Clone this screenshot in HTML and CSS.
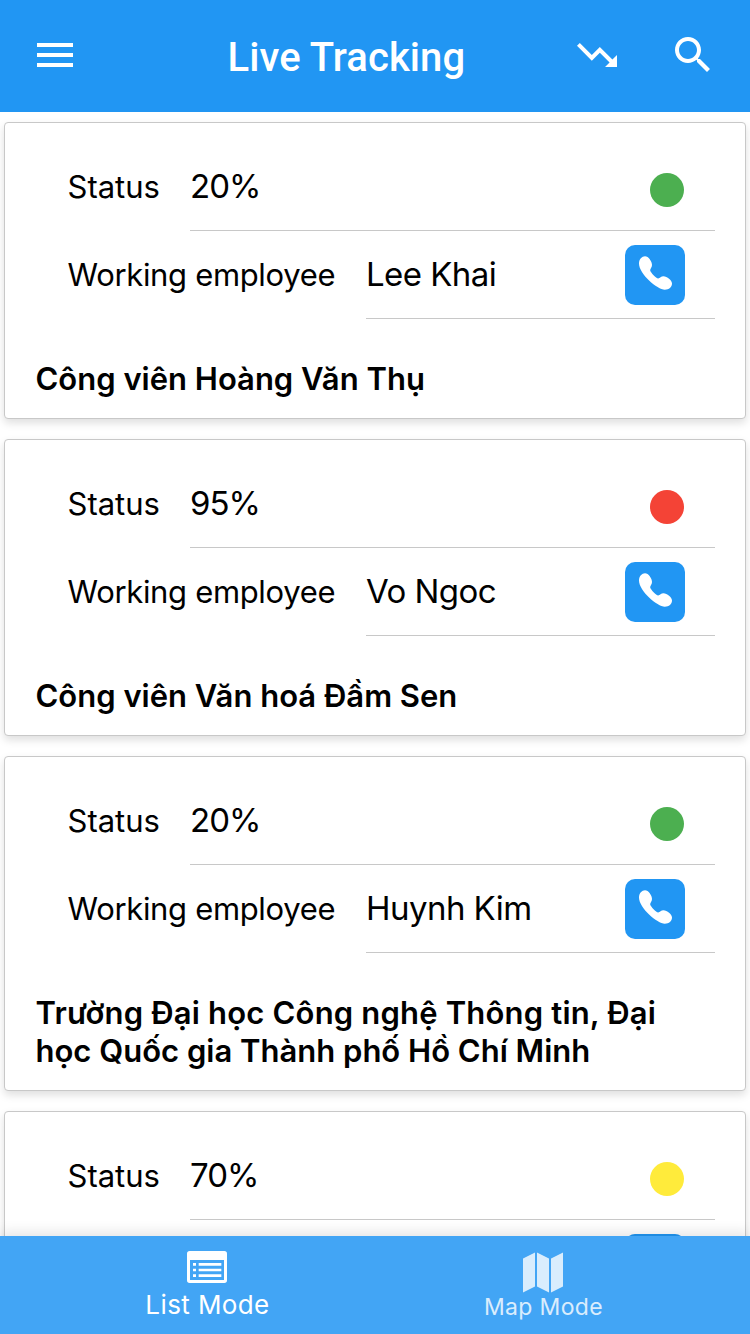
FILE: index.html
```html
<!DOCTYPE html>
<html lang="vi">
<head>
<meta charset="utf-8">
<title>Live Tracking</title>
<link rel="stylesheet" href="styles.css">
</head>
<body>
<svg class="sprite" width="0" height="0" aria-hidden="true">
  <symbol id="phone" viewBox="0 0 60 60"><path d="M14 18.5C14 14.3 17 11.3 20 11.3C23.5 11.3 27 16.5 27 20C27 22.5 25 24 25.2 25.4C25.6 27.5 31.2 33.3 33.2 33.4C35 33.4 36 31.3 38.5 31.3C42 31.3 47 35.3 47 38.5C47 42 44 44.7 39.8 44.7C32.5 44.7 14 29 14 18.5Z"/></symbol>
</svg>
<div class="app">
  <header class="toolbar">
    <svg class="icon" viewBox="0 0 24 24"><path d="M3 18h18v-2H3v2zm0-5h18v-2H3v2zm0-7v2h18V6H3z"/></svg>
    <h1 class="heading">Live Tracking</h1>
    <svg class="icon icon-trend" viewBox="0 0 24 24"><path d="M16 18l2.29-2.29-4.88-4.88-4 4L2 7.41 3.41 6l6 6 4-4 6.3 6.29L22 12v6z"/></svg>
    <svg class="icon" viewBox="0 0 24 24"><path d="M15.5 14h-.79l-.28-.27C15.41 12.59 16 11.11 16 9.5 16 5.91 13.09 3 9.5 3S3 5.91 3 9.5 5.91 16 9.5 16c1.61 0 3.09-.59 4.23-1.57l.27.28v.79l5 4.99L20.49 19l-4.99-5zm-6 0C7.01 14 5 11.99 5 9.5S7.01 5 9.5 5 14 7.01 14 9.5 11.99 14 9.5 14z"/></svg>
  </header>
  <main class="list">
    <article class="card">
      <div class="row"><span class="label">Status</span><div class="field"><span class="value percent">20%</span><span class="dot green"></span></div></div>
      <div class="row"><span class="label wide">Working employee</span><div class="field"><span class="value">Lee Khai</span><button class="call" aria-label="Call"><svg class="phone"><use href="#phone"/></svg></button></div></div>
      <h2 class="place">Công viên Hoàng Văn Thụ</h2>
    </article>
    <article class="card">
      <div class="row"><span class="label">Status</span><div class="field"><span class="value percent">95%</span><span class="dot red"></span></div></div>
      <div class="row"><span class="label wide">Working employee</span><div class="field"><span class="value">Vo Ngoc</span><button class="call" aria-label="Call"><svg class="phone"><use href="#phone"/></svg></button></div></div>
      <h2 class="place">Công viên Văn hoá Đầm Sen</h2>
    </article>
    <article class="card">
      <div class="row"><span class="label">Status</span><div class="field"><span class="value percent">20%</span><span class="dot green"></span></div></div>
      <div class="row"><span class="label wide">Working employee</span><div class="field"><span class="value">Huynh Kim</span><button class="call" aria-label="Call"><svg class="phone"><use href="#phone"/></svg></button></div></div>
      <h2 class="place"><span class="loose">Trường Đại học Công nghệ Thông tin, Đại</span><br>học Quốc gia Thành phố Hồ Chí Minh</h2>
    </article>
    <article class="card">
      <div class="row"><span class="label">Status</span><div class="field"><span class="value percent">70%</span><span class="dot yellow"></span></div></div>
      <div class="row"><span class="label wide"></span><div class="field"><button class="call" aria-label="Call"></button></div></div>
    </article>
  </main>
  <nav class="tabs">
    <div class="tab active">
      <svg class="tab-icon list-icon" viewBox="0 0 120 96"><path fill-rule="evenodd" d="M8 0H112Q120 0 120 8V88Q120 96 112 96H8Q0 96 0 88V8Q0 0 8 0ZM9 27V87H111V27Z"/><path d="M18 36h9v8h-9zM35 36h68v8H35zM18 53h9v8h-9zM35 53h68v8H35zM18 70h9v8h-9zM35 70h68v8H35z"/></svg>
      <span class="tab-text">List Mode</span>
    </div>
    <div class="tab">
      <svg class="tab-icon map-icon" viewBox="0 0 120 120"><path d="M0 18L36 0V102L0 120ZM42 0L78 18V120L42 102ZM84 18L120 0V102L84 120Z"/></svg>
      <span class="tab-text">Map Mode</span>
    </div>
  </nav>
</div>
</body>
</html>
```
FILE: styles.css
```css
* { box-sizing: border-box; }
body { margin: 0; font-family: Inter, "Noto Sans", sans-serif; color: #000; background: #fff; }
.sprite { display: block; }
.app { display: flex; flex-direction: column; height: 1334px; overflow: hidden; }
.toolbar { flex: none; display: flex; align-items: center; height: 112px; padding: 0 33px 2px 31px; background: #2196f3; }
.icon { flex: none; width: 48px; height: 48px; fill: #fff; }
.icon-trend { margin-right: 48px; }
.heading { flex: 1; margin: 0; padding: 6px 0 0 148.5px; font: 500 40px/48px Roboto, sans-serif; letter-spacing: .08px; color: #fff; white-space: nowrap; }
.list { flex: 1; min-height: 0; overflow: hidden; display: flex; flex-direction: column; gap: 20px; padding: 10px 4px 0; }
.card { flex: none; padding: 20px 30px; border: 1px solid #c8c8c8; border-radius: 4px; background: #fff; box-shadow: 0 4px 8px rgba(0, 0, 0, .13); }
.row { display: flex; height: 88px; padding-left: 32.5px; }
.label { flex: none; width: 122.5px; padding-top: 24px; font-size: 31px; line-height: 40px; white-space: nowrap; }
.label.wide { width: 298.5px; letter-spacing: -.33px; }
.field { flex: 1; display: flex; align-items: center; justify-content: flex-end; border-bottom: 1px solid #c8c8c8; padding-right: 30px; }
.value { flex: 1; margin-bottom: 2px; font-size: 33px; line-height: 40px; letter-spacing: -.55px; white-space: nowrap; }
.percent { letter-spacing: -1px; }
.dot { width: 34px; height: 34px; margin: 6px 1px 0 0; border-radius: 50%; }
.green { background: #4caf50; }
.red { background: #f44336; }
.yellow { background: #ffeb3b; }
.call { width: 60px; height: 60px; margin: 1px 0 0; padding: 0; border: 0; border-radius: 10px; background: #2196f3; }
.phone { display: block; width: 60px; height: 60px; fill: #fff; }
.place { margin: 41px 0 0 .5px; font-size: 31px; line-height: 38px; font-weight: 600; white-space: nowrap; }
.loose { letter-spacing: .18px; }
.tabs { flex: none; position: relative; display: flex; height: 98px; padding: 0 39px; background: #42a5f5; box-shadow: 0 -4px 12px rgba(0, 0, 0, .1); }
.tab { flex: 1; display: flex; flex-direction: column; align-items: center; color: #fff; opacity: .8; }
.tab.active { opacity: 1; }
.tab-icon { fill: #fff; }
.list-icon { width: 40px; height: 32px; margin-top: 15px; }
.map-icon { width: 40px; height: 41px; margin-top: 16px; }
.tab-text { margin: -1px 0 0 1px; font-size: 23px; line-height: 30px; letter-spacing: .35px; }
.active .tab-text { font-size: 26px; margin-top: 7px; letter-spacing: .4px; }
```
